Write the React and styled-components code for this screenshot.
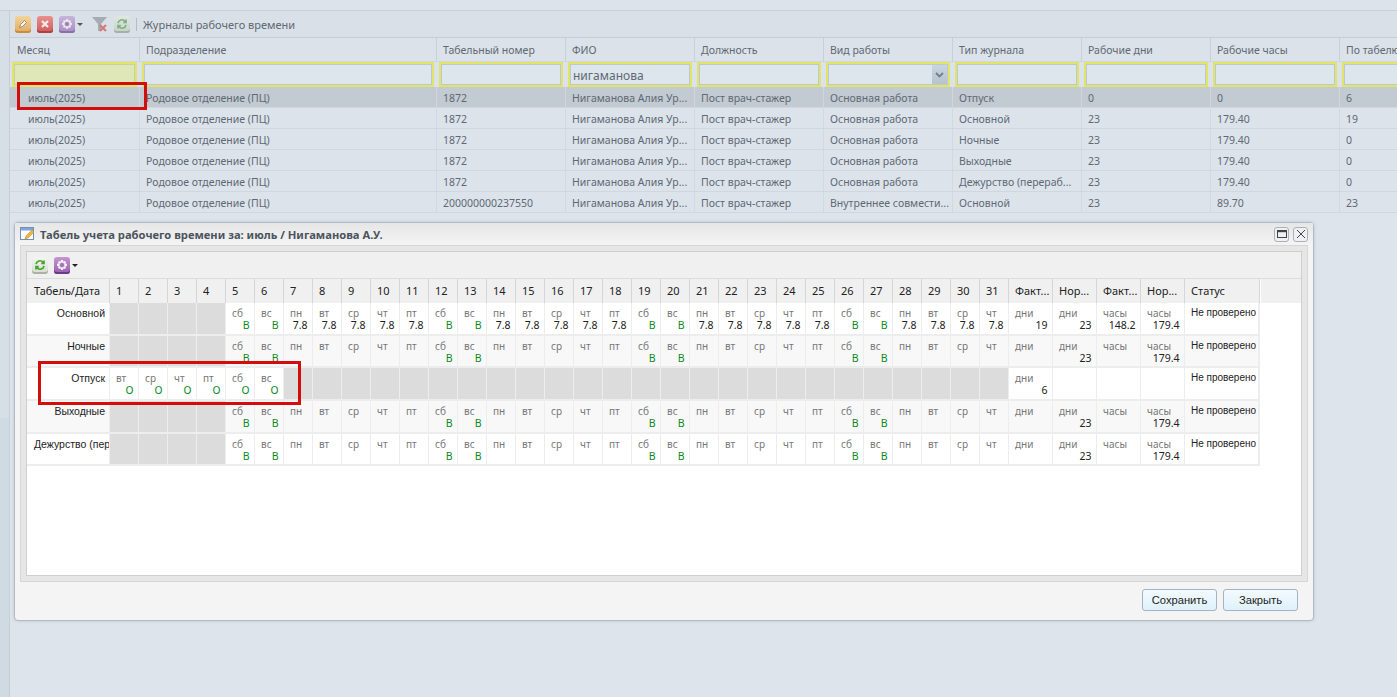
import React from "react";
import styled, { createGlobalStyle } from "styled-components";

const Global = createGlobalStyle`
  html, body { margin: 0; padding: 0; height: 100%; overflow: hidden; background: #dde4ec; }
  body { font-family: "Noto Sans", "Liberation Sans", sans-serif; font-size: 10.5px; }
  #root { height: 100%; }
  * { box-sizing: border-box; }
`;

const Page = styled.div`
  position: relative; width: 1397px; height: 697px; display: flex; flex-direction: column;
  overflow: hidden; background: #dde4ec; color: #5f6973;
`;
const TopStrip = styled.div`height: 11px; flex: none; background: #dce3ea; border-bottom: 1px solid #c9d0d8;`;
const Body = styled.div`flex: 1; display: flex; min-height: 0;`;
const LeftStrip = styled.div`
  width: 10px; flex: none; border-right: 1px solid #c6cdd5;
  background: linear-gradient(#d6dee6 0, #d6dee6 407px, #cfdae3 407px);
`;
const Main = styled.div`flex: 1; min-width: 0; display: flex; flex-direction: column;`;
const Toolbar = styled.div`
  height: 27px; display: flex; align-items: center; padding-left: 5px; gap: 6px;
  background: #d9e0e7; border-bottom: 1px solid #c6cdd5;
`;
const Tool = styled.span`
  width: 16px; height: 17px; border-radius: 3px; display: inline-flex; align-items: center; justify-content: center;
  background: ${p => p.$bg}; box-shadow: inset 0 -2px 0 ${p => p.$edge}; flex: none;
`;
const Caret = styled.span`
  width: 0; height: 0; border: 3px solid transparent; border-top: 3px solid ${p => p.$c || "#555"}; border-bottom: 0; margin-left: -4px;
`;
const Sep = styled.span`width: 1px; height: 13px; background: #b4bcc4;`;
const ToolTitle = styled.span`font-size: 11px; color: #5f6973; white-space: nowrap; padding: 1px 0 0 0;`;

const Cols = styled.div`
  display: grid; grid-template-columns: 130px 297px repeat(7, 129px) 129px; height: ${p => p.$h}px;
`;
const Head = styled.div`
  padding: 5px 0 0 ${p => p.$first ? 7 : 6}px; border-right: 1px solid #c9d0d8; white-space: nowrap; overflow: hidden;
  background: #dbe2e9; border-bottom: 1px solid #d0d7de;
`;
const FilterCell = styled.div`padding: 0 3px 0 2px; background: #dbe2e9; display: flex; align-items: center; height: 100%;`;
const Input = styled.div`
  flex: 1; height: 25px; border: 2px solid #e2e468; background: ${p => p.$bg || "#dde5ed"}; position: relative;
  box-shadow: inset 0 0 0 1px ${p => p.$bg ? "#c8d0a8" : "#bcc8d2"}; padding: 3px 0 0 3px; font-size: 12px; color: #5f6973; overflow: hidden; white-space: nowrap;
`;
const Trigger = styled.span`
  position: absolute; top: 1px; right: 1px; bottom: 1px; width: 15px; background: linear-gradient(#c9d5df, #b6c4d0);
  display: flex; align-items: center; justify-content: center;
`;
const Row = styled.div`
  display: grid; grid-template-columns: 130px 297px repeat(7, 129px) 129px; height: 21px;
  background: ${p => p.$sel ? "#c2cad2" : "#dce3eb"}; border-bottom: 1px solid #d0d7de;
`;
const Cell = styled.div`
  padding: 4px 0 0 ${p => p.$pad || 6}px; border-right: 1px solid ${p => p.$sel ? "#d0d6dc" : "#d2d9e0"};
  white-space: nowrap; overflow: hidden; color: #5f6973; text-overflow: clip;
`;

const Modal = styled.div`
  position: absolute; left: 14px; top: 222px; width: 1300px; height: 399px; background: #f4f4f4;
  border: 1px solid #b5babf; border-radius: 4px; box-shadow: 0 0 3px rgba(120,130,140,.35); display: flex; flex-direction: column;
  padding: 0 5px 0 5px;
`;
const TitleBar = styled.div`
  height: 22px; flex: none; display: flex; align-items: center; gap: 4px; margin: 0 -5px; padding: 0 5px 0 5px;
  background: linear-gradient(#e6e6e6, #f4f4f4);
`;
const TitleText = styled.span`flex: 1; font-weight: 700; font-size: 11.2px; color: #4a545e; white-space: nowrap;`;
const WinBtn = styled.span`
  width: 15px; height: 15px; border: 1px solid #a9b2ba; border-radius: 3px; background: #eef1f4;
  display: inline-flex; align-items: center; justify-content: center;
`;
const Frame = styled.div`height: 337px; flex: none; border: 1px solid #d6d6d6; background: #e6e6e6; padding: 5px;`;
const Inner = styled.div`height: 100%; border: 1px solid #cfcfcf; background: #fff; display: flex; flex-direction: column;`;
const InnerBar = styled.div`height: 27px; flex: none; background: #f0f0f0; border-bottom: 1px solid #dcdcdc; display: flex; align-items: center; padding-left: 5px; gap: 6px;`;
const Table = styled.div`
  display: grid; width: 1234px;
  grid-template-columns: 83px repeat(31, 29px) repeat(4, 44px) 75px;
  grid-template-rows: 24px repeat(5, 32.7px);
`;
const HeadFill = styled.div`
  position: absolute; left: 1234px; right: 0; top: 0; height: 24px; background: #f0f0f0;
`;
const TableWrap = styled.div`position: relative; flex: none;`;
const THead = styled.div`
  background: #f0f0f0; border-right: 1px solid #d6d6d6; color: #222; font-size: 11px; padding: 4px 0 0 ${p => p.$p || 7}px;
  white-space: nowrap; overflow: hidden;
`;
const RowName = styled.div`
  background: ${p => p.$alt ? "#f8f8f9" : "#fff"}; border-right: 1px solid #ededed; border-bottom: 2px solid #ededed; color: #222;
  text-align: right; padding: 4px 4px 0 7px; white-space: nowrap; overflow: hidden; font: 10.5px "Liberation Sans", sans-serif;
`;
const Day = styled.div`
  position: relative; background: ${p => p.$off ? "#dcdcdc" : p.$alt ? "#f8f8f9" : "#fff"}; border-right: 1px solid #ededed; border-bottom: 2px solid #ededed;
  padding: 4px 4.5px 0 6px; display: flex; flex-direction: column; overflow: hidden;
`;
const Week = styled.span`color: #777; font-size: 10px; line-height: 12px;`;
const Val = styled.span`
  color: ${p => p.$green ? "#0a8a1f" : "#222"}; text-align: right; font-size: 10.5px; line-height: 13px;
`;
const Status = styled.div`
  background: ${p => p.$alt ? "#f8f8f9" : "#fff"}; border-right: 2px solid #ededed; border-bottom: 2px solid #ededed; color: #222;
  padding: 4px 0 0 6px; white-space: nowrap; overflow: hidden; font: 10px "Liberation Sans", sans-serif;
`;
const Footer = styled.div`flex: 1; display: flex; justify-content: flex-end; align-items: flex-start; gap: 6px; padding: 7px 10px 0 0;`;
const Button = styled.button`
  width: 75px; height: 22px; border: 1px solid #a3b3c2; border-radius: 3px; background: linear-gradient(#f3fbff, #dff1fb);
  font: 11.2px "Liberation Sans", sans-serif; color: #222; padding: 0;
`;
const Mark = styled.div`
  position: absolute; left: ${p => p.$x}px; top: ${p => p.$y}px; width: ${p => p.$w}px; height: ${p => p.$h}px;
  border: 3px solid #d30c0c; pointer-events: none;
`;

const Refresh = ({ dim }) => (
  <svg width="12" height="12" viewBox="0 0 12 12" fill="none" stroke={dim ? "#7fb27f" : "#4aa32c"} strokeWidth="1.7">
    <path d="M2 5.2A4 4 0 0 1 9 3.2L10 4.4M10 1.6v2.8H7.2" />
    <path d="M10 6.8A4 4 0 0 1 3 8.8L2 7.6M2 10.4V7.6h2.8" />
  </svg>
);
const Gear = ({ c = "#eee" }) => (
  <svg width="12" height="12" viewBox="0 0 12 12">
    <g fill={c}>
      <circle cx="6" cy="2.4" r="1.4" /><circle cx="6" cy="9.6" r="1.4" /><circle cx="2.4" cy="6" r="1.4" /><circle cx="9.6" cy="6" r="1.4" />
      <circle cx="3.5" cy="3.5" r="1.3" /><circle cx="8.5" cy="3.5" r="1.3" /><circle cx="3.5" cy="8.5" r="1.3" /><circle cx="8.5" cy="8.5" r="1.3" />
    </g>
    <circle cx="6" cy="6" r="1.7" fill="#9a78b4" />
  </svg>
);

const heads = ["Месяц","Подразделение","Табельный номер","ФИО","Должность","Вид работы","Тип журнала","Рабочие дни","Рабочие часы","По табелю"];
const base = ["июль(2025)","Родовое отделение (ПЦ)","1872","Нигаманова Алия Ур...","Пост врач-стажер","Основная работа"];
const rows = [
  [...base,"Отпуск","0","0","6"],
  [...base,"Основной","23","179.40","19"],
  [...base,"Ночные","23","179.40","0"],
  [...base,"Выходные","23","179.40","0"],
  [...base,"Дежурство (перераб...","23","179.40","0"],
  ["июль(2025)","Родовое отделение (ПЦ)","200000000237550","Нигаманова Алия Ур...","Пост врач-стажер","Внутреннее совмести...","Основной","23","89.70","23"],
];

const wk = ["вт","ср","чт","пт","сб","вс","пн"];
const days = Array.from({ length: 31 }, (_, i) => i + 1);
const weekOf = d => wk[(d - 1) % 7];
const isWeekend = d => ["сб", "вс"].includes(weekOf(d));

const sheets = [
  { name: "Основной", work: "7.8", tail: [["дни","19"],["дни","23"],["часы","148.2"],["часы","179.4"]] },
  { name: "Ночные", tail: [["дни",""],["дни","23"],["часы",""],["часы","179.4"]] },
  { name: "Отпуск", vacation: true, tail: [["дни","6"],["",""],["",""],["",""]] },
  { name: "Выходные", tail: [["дни",""],["дни","23"],["часы",""],["часы","179.4"]] },
  { name: "Дежурство (переработка)", tail: [["дни",""],["дни","23"],["часы",""],["часы","179.4"]] },
];

function DayCell({ sheet, d, alt }) {
  if (sheet.vacation) {
    if (d > 6) return <Day $off />;
    return <Day $alt={alt}><Week>{weekOf(d)}</Week><Val $green>О</Val></Day>;
  }
  if (d < 5) return <Day $off />;
  const wknd = isWeekend(d);
  return (
    <Day $alt={alt}>
      <Week>{weekOf(d)}</Week>
      {wknd ? <Val $green>В</Val> : sheet.work ? <Val>{sheet.work}</Val> : null}
    </Day>
  );
}

export default function App() {
  return (
    <Page>
      <Global />
      <TopStrip />
      <Body>
        <LeftStrip />
        <Main>
          <Toolbar>
            <Tool $bg="linear-gradient(#f3d49a,#e3a95f)" $edge="#c98c3f">
              <svg width="10" height="10" viewBox="0 0 10 10"><path d="M1.5 8.5l1-3L6.5 1.5l2 2-4 4z" fill="#f5f5f5" stroke="#8a7a66" strokeWidth=".8" /></svg>
            </Tool>
            <Tool $bg="linear-gradient(#e98f8f,#cf5a5a)" $edge="#b04040">
              <svg width="10" height="10" viewBox="0 0 10 10"><path d="M2 2l6 6M8 2L2 8" stroke="#f7eaea" strokeWidth="2.2" /></svg>
            </Tool>
            <Tool $bg="linear-gradient(#c9b4dc,#a78cc4)" $edge="#8a6fa8"><Gear /></Tool>
            <Caret />
            <svg width="16" height="17" viewBox="0 0 16 17" style={{ marginLeft: 3 }}>
              <path d="M0 1h15L9 8v7H6V8z" fill="#a5acb2" />
              <path d="M8 9l6 6M14 9l-6 6" stroke="#d27a78" strokeWidth="2" />
            </svg>
            <Tool $bg="linear-gradient(#dfe8e2,#c5d0c9)" $edge="#a6b0aa"><Refresh dim /></Tool>
            <Sep />
            <ToolTitle>Журналы рабочего времени</ToolTitle>
          </Toolbar>
          <Cols $h={24}>
            {heads.map((h, i) => <Head key={h} $first={i === 0}>{h}</Head>)}
          </Cols>
          <Cols $h={25}>
            {heads.map((h, i) => (
              <FilterCell key={h}>
                <Input $bg={i === 0 ? "#dfe6b8" : undefined}>
                  {h === "ФИО" ? "нигаманова" : ""}
                  {h === "Вид работы" && (
                    <Trigger>
                      <svg width="9" height="6" viewBox="0 0 9 6"><path d="M1 1l3.5 3.5L8 1" fill="none" stroke="#6f7f8c" strokeWidth="1.8" /></svg>
                    </Trigger>
                  )}
                </Input>
              </FilterCell>
            ))}
          </Cols>
          {rows.map((r, i) => (
            <Row key={i} $sel={i === 0}>
              {r.map((c, j) => <Cell key={j} $sel={i === 0} $pad={j === 0 ? 18 : 6}>{c}</Cell>)}
            </Row>
          ))}
        </Main>
      </Body>

      <Modal>
        <TitleBar>
          <svg width="16" height="16" viewBox="0 0 16 16">
            <rect x=".5" y="1.5" width="13" height="12" fill="#fff" stroke="#6f8fb5" />
            <rect x="1" y="2" width="12" height="2.5" fill="#7fa6d8" />
            <path d="M5 13l1-3 6-6 2 2-6 6z" fill="#f0b840" stroke="#b8862a" strokeWidth=".6" />
          </svg>
          <TitleText>Табель учета рабочего времени за: июль / Нигаманова А.У.</TitleText>
          <WinBtn><svg width="10" height="8" viewBox="0 0 10 8"><rect x=".5" y=".5" width="9" height="7" fill="none" stroke="#444" /><path d="M0 1.5h10" stroke="#444" strokeWidth="1.4" /></svg></WinBtn>
          <WinBtn><svg width="10" height="10" viewBox="0 0 10 10"><path d="M1 1l8 8M9 1l-8 8" stroke="#444" strokeWidth="1" /></svg></WinBtn>
        </TitleBar>
        <Frame>
          <Inner>
            <InnerBar>
              <Tool $bg="linear-gradient(#f2f5f0,#d5ddd2)" $edge="#aab3a6"><Refresh /></Tool>
              <Tool $bg="linear-gradient(#c596cf,#9a5cb0)" $edge="#6d3a88"><Gear c="#fff" /></Tool>
              <Caret $c="#222" />
            </InnerBar>
            <TableWrap>
              <HeadFill />
              <Table>
                <THead>Табель/Дата</THead>
                {days.map(d => <THead key={d} $p={6}>{d}</THead>)}
                {["Факт...","Нор...","Факт...","Нор..."].map((t, i) => <THead key={i} $p={6}>{t}</THead>)}
                <THead $p={6}>Статус</THead>
                {sheets.map((s, i) => (
                  <React.Fragment key={s.name}>
                    <RowName $alt={i % 2 === 1}>{s.name}</RowName>
                    {days.map(d => <DayCell key={d} sheet={s} d={d} alt={i % 2 === 1} />)}
                    {s.tail.map(([a, b], k) => (
                      <Day key={k} $alt={i % 2 === 1}><Week>{a}</Week><Val>{b}</Val></Day>
                    ))}
                    <Status $alt={i % 2 === 1}>Не проверено</Status>
                  </React.Fragment>
                ))}
              </Table>
            </TableWrap>
          </Inner>
        </Frame>
        <Footer>
          <Button>Сохранить</Button>
          <Button>Закрыть</Button>
        </Footer>
      </Modal>
      <Mark $x={17} $y={82} $w={130} $h={28} />
      <Mark $x={38} $y={361} $w={263} $h={44} />
    </Page>
  );
}
